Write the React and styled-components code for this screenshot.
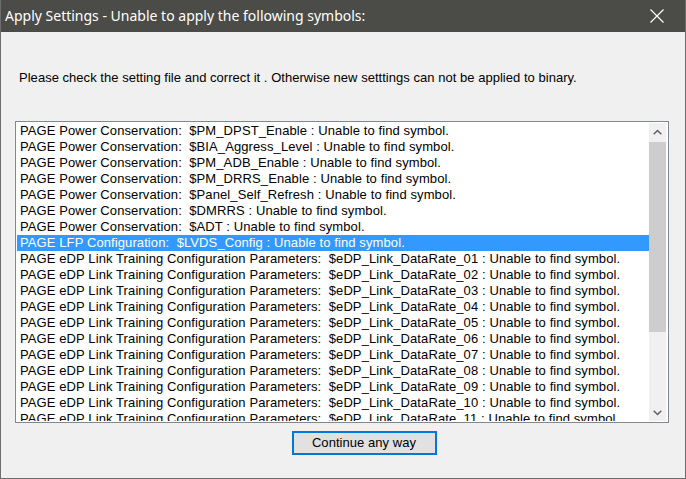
import styled, { createGlobalStyle } from "styled-components";

const GlobalStyle = createGlobalStyle`
  html, body {
    margin: 0;
    padding: 0;
    background: #f0f0f0;
  }
`

const Window = styled.div`
  width: 686px;
  height: 479px;
  box-sizing: border-box;
  display: flex;
  flex-direction: column;
  background: #f0f0f0;
  border: 1px solid #6d6d6d;
  border-top: none;
  overflow: hidden;
`

const TitleBar = styled.div`
  height: 32px;
  flex-shrink: 0;
  display: flex;
  align-items: center;
  justify-content: space-between;
  background: #4b4b48;
  color: #ffffff;
  margin: 0 -1px;
`

const Title = styled.span`
  font-family: "Noto Sans", "Open Sans", sans-serif;
  font-size: 14px;
  padding-left: 5px;
  padding-bottom: 1px;
`

const CloseButton = styled.div`
  width: 46px;
  height: 32px;
  display: flex;
  align-items: center;
  justify-content: center;
  margin-right: 6px;
`

const Body = styled.div`
  flex: 1;
  display: flex;
  flex-direction: column;
  padding: 38px 16px 0 14px;
  font-family: "Liberation Sans", Arial, sans-serif;
  font-size: 13px;
  color: #000;
`

const Message = styled.div`
  padding-left: 4px;
  line-height: 16px;
  height: 16px;
  letter-spacing: 0.03px;
  white-space: pre;
`

const ListBox = styled.div`
  margin-top: 35px;
  height: 302px;
  box-sizing: border-box;
  border: 1px solid #828790;
  background: #fff;
  display: flex;
  padding: 1px 2px 1px 1px;
`

const Rows = styled.div`
  flex: 1;
  overflow: hidden;
`

const Row = styled.div`
  height: 16px;
  line-height: 16px;
  padding-left: 3px;
  white-space: pre;
  letter-spacing: 0.1px;
  background: ${(p) => (p.$selected ? "#3399ff" : "transparent")};
  color: ${(p) => (p.$selected ? "#fff" : "#000")};
`

const ScrollBar = styled.div`
  width: 17px;
  display: flex;
  flex-direction: column;
  background: #f0f0f0;
`

const ScrollArrow = styled.div`
  height: 17px;
  display: flex;
  align-items: center;
  justify-content: center;
`

const ScrollTrack = styled.div`
  flex: 1;
  display: flex;
  flex-direction: column;
`

const Thumb = styled.div`
  height: 190px;
  margin: 2px 0 0 0;
  background: #cdcdcd;
`

const Footer = styled.div`
  display: flex;
  justify-content: center;
  padding-top: 8px;
  padding-left: 44px;
`

const Button = styled.button`
  width: 145px;
  height: 24px;
  box-sizing: border-box;
  background: #e1e1e1;
  border: 2px solid #0078d7;
  font-family: "Liberation Sans", Arial, sans-serif;
  font-size: 13px;
  letter-spacing: 0.05px;
  color: #000;
  padding: 0 0 1px 0;
`

const Chevron = ({ up }) => (
  <svg width="9" height="6" viewBox="0 0 9 6">
    <path
      d={up ? "M0.7 5.3 L4.5 1.5 L8.3 5.3" : "M0.7 0.7 L4.5 4.5 L8.3 0.7"}
      fill="none"
      stroke="#606060"
      strokeWidth="1.5"
    />
  </svg>
);

const power = [
  "PM_DPST_Enable",
  "BIA_Aggress_Level",
  "PM_ADB_Enable",
  "PM_DRRS_Enable",
  "Panel_Self_Refresh",
  "DMRRS",
  "ADT",
];

const rows = [
  ...power.map((s) => `PAGE Power Conservation:  $${s} : Unable to find symbol.`),
  "PAGE LFP Configuration:  $LVDS_Config : Unable to find symbol.",
  ...Array.from({ length: 18 }, (_, i) =>
    `PAGE eDP Link Training Configuration Parameters:  $eDP_Link_DataRate_${String(i + 1).padStart(2, "0")} : Unable to find symbol.`
  ),
];

export default function App() {
  return (
    <>
      <GlobalStyle />
      <Window>
        <TitleBar>
          <Title>Apply Settings - Unable to apply the following symbols:</Title>
          <CloseButton>
            <svg width="14" height="14" viewBox="0 0 14 14">
              <path d="M0.5 0.5 L13.5 13.5 M13.5 0.5 L0.5 13.5" stroke="#fff" strokeWidth="1.2" />
            </svg>
          </CloseButton>
        </TitleBar>
        <Body>
          <Message>
            Please check the setting file and correct it . Otherwise new setttings can not be applied to binary.
          </Message>
          <ListBox>
            <Rows>
              {rows.map((r, i) => (
                <Row key={i} $selected={i === 7}>{r}</Row>
              ))}
            </Rows>
            <ScrollBar>
              <ScrollArrow><Chevron up /></ScrollArrow>
              <ScrollTrack><Thumb /></ScrollTrack>
              <ScrollArrow><Chevron /></ScrollArrow>
            </ScrollBar>
          </ListBox>
          <Footer>
            <Button>Continue any way</Button>
          </Footer>
        </Body>
      </Window>
    </>
  );
}
